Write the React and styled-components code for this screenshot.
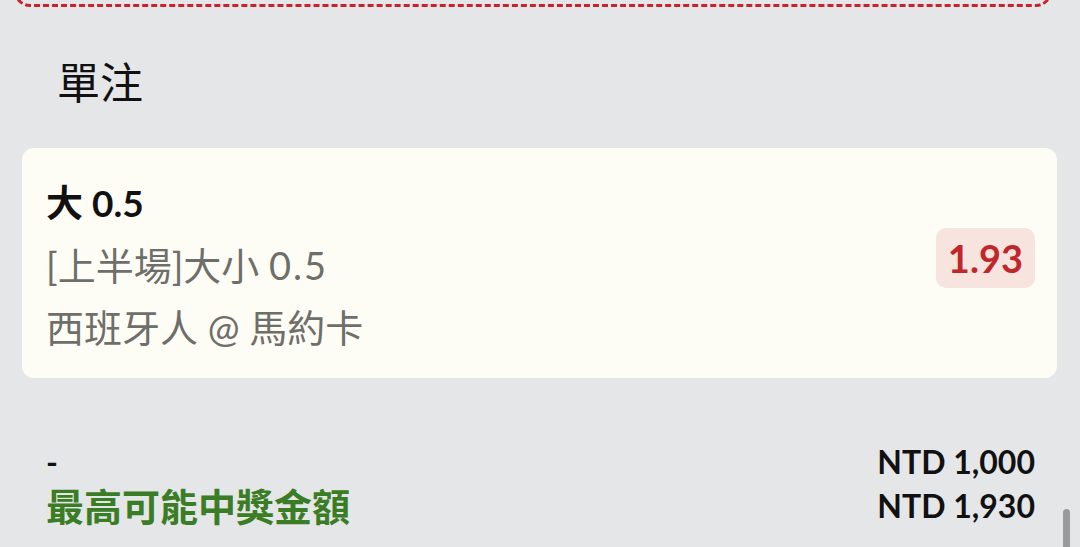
import styled, { createGlobalStyle } from "styled-components";

const GlobalStyle = createGlobalStyle`
  html, body {
    margin: 0;
    padding: 0;
    background: #e5e6e8;
    overflow: hidden;
  }
  body {
    font-family: Lato, "Noto Sans CJK TC", sans-serif;
  }
`;

const Page = styled.div`
  position: relative;
  width: 1080px;
  height: 547px;
  overflow: hidden;
  background: #e5e6e8;
`;

const DashedBox = styled.div`
  height: 60px;
  margin: -59px 28px 0 14px;
  border: 3px dashed #c8232c;
  border-radius: 16px;
`;

const SectionTitle = styled.h2`
  margin: 0;
  padding: 52px 0 0 57px;
  font-size: 43px;
  line-height: 48px;
  font-weight: 400;
  color: #111;
`;

const Card = styled.div`
  display: flex;
  align-items: center;
  justify-content: space-between;
  margin: 41px 23px 0 22px;
  padding: 24px 22px 20px 24px;
  background: #fdfdf5;
  border-radius: 12px;
`;

const Lines = styled.div`
  display: flex;
  flex-direction: column;
`;

const Line = styled.div`
  font-size: ${(p) => (p.$bold ? "37px" : "38px")};
  line-height: 62px;
  font-weight: ${(p) => (p.$bold ? 700 : 400)};
  color: ${(p) => (p.$bold ? "#111" : "#6e6e6a")};
  white-space: nowrap;
`;

const Num = styled.span`
  letter-spacing: 2px;
`;

const Odds = styled.div`
  margin-top: -14px;
  padding: 6px 12px;
  border-radius: 10px;
  background: #f8e4df;
  color: #c0262a;
  font-size: 38px;
  line-height: 48px;
  font-weight: 700;
`;

const Summary = styled.div`
  display: grid;
  grid-template-columns: 1fr auto;
  margin: 62px 45px 0 46px;
`;

const Cell = styled.div`
  font-size: ${(p) => (p.$big ? "38px" : "32px")};
  line-height: 44px;
  font-weight: 700;
  color: ${(p) => p.$color || "#111"};
  text-align: ${(p) => (p.$right ? "right" : "left")};
`;

const Scrollbar = styled.div`
  position: absolute;
  right: 10px;
  bottom: -6px;
  width: 7px;
  height: 44px;
  border-radius: 4px;
  background: #9a9a9a;
`;

export default function App() {
  return (
    <Page>
      <GlobalStyle />
      <DashedBox />
      <SectionTitle>單注</SectionTitle>
      <Card>
        <Lines>
          <Line $bold>大 0.5</Line>
          <Line>
            [上半場]大小 <Num>0.5</Num>
          </Line>
          <Line>西班牙人 @ 馬約卡</Line>
        </Lines>
        <Odds>1.93</Odds>
      </Card>
      <Summary>
        <Cell>-</Cell>
        <Cell $right>NTD 1,000</Cell>
        <Cell $color="#3b7d25" $big>
          最高可能中獎金額
        </Cell>
        <Cell $right>NTD 1,930</Cell>
      </Summary>
      <Scrollbar />
    </Page>
  );
}
